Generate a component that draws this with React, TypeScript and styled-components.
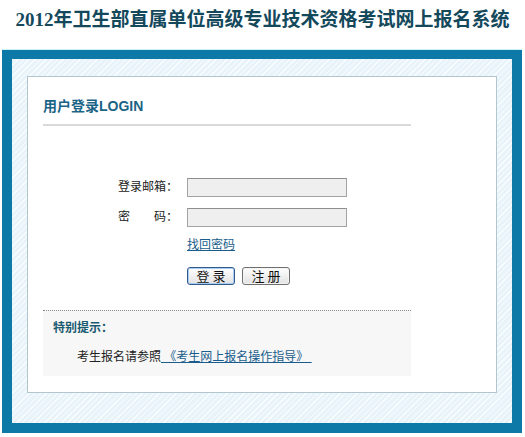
import React from 'react';
import styled, { createGlobalStyle } from 'styled-components';

const GlobalStyle = createGlobalStyle`
    html, body {
        margin: 0;
        padding: 0;
        background: #ffffff;
    }
    body {
        font-family: 'Liberation Sans', 'Noto Sans CJK SC', sans-serif;
        font-size: 12px;
        color: #222;
    }
`;

const Page = styled.div`
    width: 525px;
    height: 437px;
    overflow: hidden;
`;

const Title = styled.h1`
    margin: 0;
    height: 50px;
    padding-top: 8px;
    box-sizing: border-box;
    line-height: 24px;
    text-align: center;
    font-family: 'Liberation Serif', 'Noto Sans CJK SC', serif;
    font-size: 19px;
    font-weight: bold;
    color: #14495c;
`;

const Frame = styled.div`
    margin-left: 2px;
    width: 520px;
    box-sizing: border-box;
    border: 10px solid #0d79a7;
    border-top-width: 9px;
    box-shadow: 0 -1px 0 #c9f1f6;
    padding: 17px 15px 30px 15px;
    background: repeating-linear-gradient(
        135deg,
        #fafdfe 0 1px,
        #e8f4f9 1px 4px
    );
`;

const Panel = styled.div`
    height: 317px;
    box-sizing: border-box;
    border: 1px solid #b3c6ce;
    background: #ffffff;
    padding: 0 15px;
`;

const Content = styled.div`
    width: 368px;
`;

const Heading = styled.div`
    padding: 20px 0 9px;
    line-height: 18px;
    border-bottom: 2px solid #dadada;
    font-size: 14px;
    font-weight: bold;
    color: #1a6485;
`;

const Form = styled.div`
    margin-top: 52px;
    display: grid;
    grid-template-columns: 135px 160px;
    grid-template-rows: 19px 19px 18px 18px;
    column-gap: 9px;
    row-gap: 11px;
`;

const Label = styled.div`
    text-align: right;
    line-height: 19px;
    color: #222;
    white-space: nowrap;
`;

const LabelText = styled.span`
    display: inline-block;
    width: 48px;
    text-align: justify;
    text-align-last: justify;
    vertical-align: top;
`;

const Input = styled.input`
    width: 160px;
    height: 19px;
    box-sizing: border-box;
    margin: 0;
    padding: 1px 3px;
    border: 1px solid #a3a3a3;
    border-top-color: #8e8e8e;
    background: #efefef;
    font-size: 12px;
    font-family: inherit;
`;

const Cell = styled.div<{ $col?: number }>`
    grid-column: ${(p) => p.$col ?? 'auto'};
    display: flex;
    gap: 7px;
    align-items: flex-start;
`;

const Link = styled.a`
    color: #1a5d8c;
    text-decoration: underline;
    line-height: 14px;
    cursor: pointer;
`;

const Button = styled.button<{ $primary?: boolean }>`
    width: 48px;
    height: 18px;
    margin: 0;
    padding: 0;
    box-sizing: border-box;
    border: 1px solid ${(p) => (p.$primary ? '#2f5a8a' : '#707070')};
    border-radius: 3px;
    background: linear-gradient(#ffffff, #e2e2e2);
    box-shadow: ${(p) => (p.$primary ? 'inset 0 0 0 1px #a9cdf0' : 'inset 0 0 0 1px #f4f4f4')};
    font-family: 'Liberation Sans', 'Noto Sans CJK SC', sans-serif;
    font-size: 13px;
    line-height: 15px;
    color: #111;
    letter-spacing: 3px;
    text-indent: 3px;
    cursor: pointer;
`;

const Tips = styled.div`
    margin-top: 25px;
    border-top: 1px dotted #8a8a8a;
    background: #f7f7f7;
    padding: 10px 10px 13px;
    height: 66px;
    box-sizing: border-box;
`;

const TipsTitle = styled.div`
    line-height: 14px;
    font-weight: bold;
    color: #1a5a70;
`;

const TipsText = styled.div`
    margin-top: 15px;
    padding-left: 24px;
    line-height: 14px;
    color: #222;
    white-space: pre;
`;

const App: React.FC = () => {
    return (
        <Page>
            <GlobalStyle />
            <Title>2012年卫生部直属单位高级专业技术资格考试网上报名系统</Title>
            <Frame>
                <Panel>
                    <Content>
                        <Heading>用户登录LOGIN</Heading>
                        <Form>
                            <Label>
                                <LabelText>登录邮箱</LabelText>：
                            </Label>
                            <Input type="text" />
                            <Label>
                                <LabelText>密码</LabelText>：
                            </Label>
                            <Input type="password" />
                            <Cell $col={2}>
                                <Link>找回密码</Link>
                            </Cell>
                            <Cell $col={2}>
                                <Button $primary>登录</Button>
                                <Button>注册</Button>
                            </Cell>
                        </Form>
                        <Tips>
                            <TipsTitle>特别提示：</TipsTitle>
                            <TipsText>
                                考生报名请参照<Link> 《考生网上报名操作指导》 </Link>
                            </TipsText>
                        </Tips>
                    </Content>
                </Panel>
            </Frame>
        </Page>
    );
};

export default App;
